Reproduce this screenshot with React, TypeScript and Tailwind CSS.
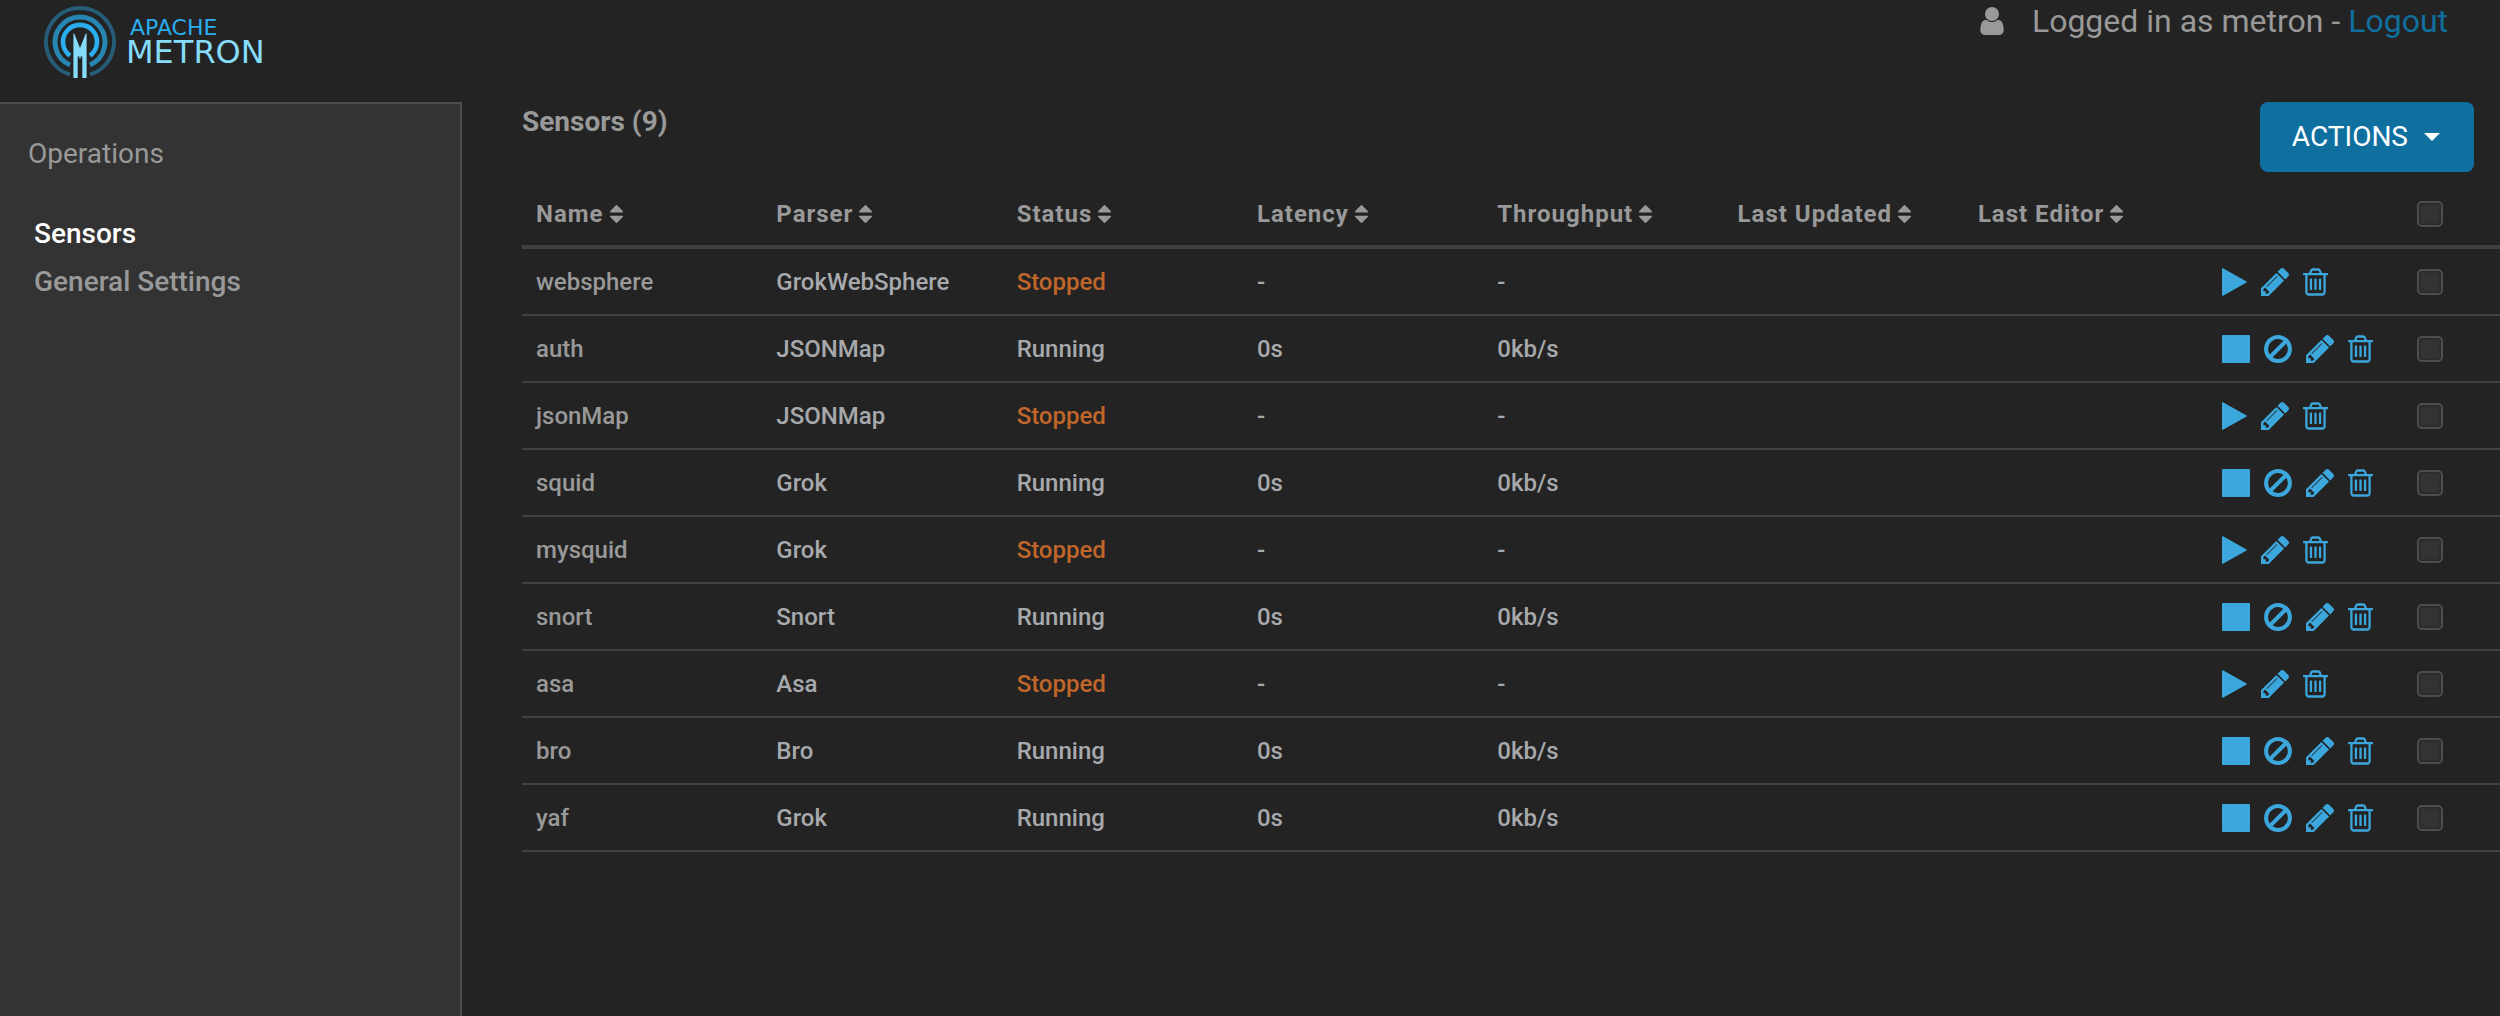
import type { ReactNode } from "react";

type Status = "Running" | "Stopped";

interface Sensor {
  name: string;
  parser: string;
  status: Status;
}

const sensors: Sensor[] = [
  { name: "websphere", parser: "GrokWebSphere", status: "Stopped" },
  { name: "auth", parser: "JSONMap", status: "Running" },
  { name: "jsonMap", parser: "JSONMap", status: "Stopped" },
  { name: "squid", parser: "Grok", status: "Running" },
  { name: "mysquid", parser: "Grok", status: "Stopped" },
  { name: "snort", parser: "Snort", status: "Running" },
  { name: "asa", parser: "Asa", status: "Stopped" },
  { name: "bro", parser: "Bro", status: "Running" },
  { name: "yaf", parser: "Grok", status: "Running" },
];

const columns = [
  "Name",
  "Parser",
  "Status",
  "Latency",
  "Throughput",
  "Last Updated",
  "Last Editor",
];

function UserIcon() {
  return (
    <svg viewBox="256 128 1280 1536" className="h-7 w-6 fill-current" aria-hidden="true">
      <path d="M1536 1399q0 109-62.5 187t-150.5 78h-854q-88 0-150.5-78t-62.5-187q0-85 8.5-160.5t31.5-152 58.5-131 94-89 134.5-34.5q131 128 313 128t313-128q76 0 134.5 34.5t94 89 58.5 131 31.5 152 8.5 160.5zm-256-887q0 159-112.5 271.5t-271.5 112.5-271.5-112.5-112.5-271.5 112.5-271.5 271.5-112.5 271.5 112.5 112.5 271.5z" />
    </svg>
  );
}

function PlayIcon() {
  return (
    <svg viewBox="192 128 1408 1536" className="h-7 w-[25px] fill-current" aria-hidden="true">
      <path d="M1576 927l-1328 738q-23 13-39.5 3t-16.5-36v-1472q0-26 16.5-36t39.5 3l1328 738q23 13 23 31t-23 31z" />
    </svg>
  );
}

function StopIcon() {
  return (
    <svg viewBox="128 128 1536 1536" className="size-7 fill-current" aria-hidden="true">
      <path d="M1664 192v1408q0 26-19 45t-45 19h-1408q-26 0-45-19t-19-45v-1408q0-26 19-45t45-19h1408q26 0 45 19t19 45z" />
    </svg>
  );
}

function BanIcon() {
  return (
    <svg viewBox="128 122 1536 1542" className="size-7 fill-current" aria-hidden="true">
      <path d="M1440 893q0-161-87-295l-754 753q137 89 297 89 111 0 211.5-43.5t173.5-116.5 116-174.5 43-212.5zm-999 299l755-754q-135-91-300-91-148 0-273 73t-198 199-73 274q0 162 89 299zm1223-299q0 157-61 300t-163.5 246-245 164-298.5 61-298.5-61-245-164-163.5-246-61-300 61-299.5 163.5-245.5 245-164 298.5-61 298.5 61 245 164 163.5 245.5 61 299.5z" />
    </svg>
  );
}

function PencilIcon() {
  return (
    <svg viewBox="128 149 1515 1515" className="size-7 fill-current" aria-hidden="true">
      <path d="M491 1536l91-91-235-235-91 91v107h128v128h107zm523-928q0-22-22-22-10 0-17 7l-542 542q-7 7-7 17 0 22 22 22 10 0 17-7l542-542q7-7 7-17zm-54-192l416 416-832 832h-416v-416zm683 96q0 53-37 90l-166 166-416-416 166-165q36-38 90-38 53 0 91 38l235 234q37 39 37 91z" />
    </svg>
  );
}

function TrashIcon() {
  return (
    <svg viewBox="192 128 1408 1536" className="h-7 w-[25px] fill-current" aria-hidden="true">
      <path d="M704 736v576q0 14-9 23t-23 9h-64q-14 0-23-9t-9-23v-576q0-14 9-23t23-9h64q14 0 23 9t9 23zm256 0v576q0 14-9 23t-23 9h-64q-14 0-23-9t-9-23v-576q0-14 9-23t23-9h64q14 0 23 9t9 23zm256 0v576q0 14-9 23t-23 9h-64q-14 0-23-9t-9-23v-576q0-14 9-23t23-9h64q14 0 23 9t9 23zm128 724v-948h-896v948q0 22 7 40.5t14.5 27 10.5 8.5h832q3 0 10.5-8.5t14.5-27 7-40.5zm-672-1076h448l-48-117q-7-9-17-11h-317q-10 2-17 11zm928 32v64q0 14-9 23t-23 9h-96v948q0 83-47 143.5t-113 60.5h-832q-66 0-113-58.5t-47-141.5v-952h-96q-14 0-23-9t-9-23v-64q0-14 9-23t23-9h309l70-167q15-37 54-63t79-26h320q40 0 79 26t54 63l70 167h309q14 0 23 9t9 23z" />
    </svg>
  );
}

function SortIcon() {
  return (
    <svg viewBox="384 192 1024 1408" className="h-[18px] w-[13px] fill-current" aria-hidden="true">
      <path d="M1408 1088q0 26-19 45l-448 448q-19 19-45 19t-45-19l-448-448q-19-19-19-45t19-45 45-19h896q26 0 45 19t19 45zm0-384q0 26-19 45t-45 19h-896q-26 0-45-19t-19-45 19-45l448-448q19-19 45-19t45 19l448 448q19 19 19 45z" />
    </svg>
  );
}

function Logo() {
  return (
    <a href="#home" aria-label="Apache Metron" className="flex items-start gap-2.5">
      <svg viewBox="0 0 72 72" className="size-[72px] overflow-visible" fill="none" aria-hidden="true">
        <path d="M26 68.5A34 34 0 1 1 46 68.5" stroke="#255c77" strokeWidth="4" />
        <path d="M26 59A25 25 0 1 1 46 59" stroke="#2785b1" strokeWidth="5" />
        <path d="M26 49.6A17 17 0 1 1 46 49.6" stroke="#2aaef0" strokeWidth="4.6" />
        <path
          d="M29.4 27.5L30.2 27.5L36 42L41.8 27.5L42.6 27.5V72H38.3V51.5L37.2 49.5L36 53.5L34.8 49.5L33.7 51.5V72H29.4Z"
          fill="#85dcfb"
        />
      </svg>
      <span className="flex flex-col pt-3 font-['DejaVu_Sans',sans-serif]">
        <span className="pl-1 text-[22px] leading-5 text-[#2aaeef]">APACHE</span>
        <span className="text-[32px] leading-7 text-[#85dcfb]">METRON</span>
      </span>
    </a>
  );
}

function IconButton({ label, children }: { label: string; children: ReactNode }) {
  return (
    <button type="button" aria-label={label} className="block cursor-pointer">
      {children}
    </button>
  );
}

function Tick({ label }: { label: string }) {
  return (
    <input
      type="checkbox"
      aria-label={label}
      className="block size-[26px] appearance-none rounded-[5px] border-2 border-[#4d4d4d] bg-[#333] shadow-[inset_0_0_2px_1px_#262626] checked:bg-[#3ca7dc]"
    />
  );
}

function SensorRow({ sensor }: { sensor: Sensor }) {
  const running = sensor.status === "Running";
  return (
    <tr className="h-[67px] [&>td]:border-b-2 [&>td]:border-[#404040] [&>td]:px-3.5">
      <td className="text-[#999]">{sensor.name}</td>
      <td>{sensor.parser}</td>
      <td className={running ? "" : "text-[#c0662a]"}>{sensor.status}</td>
      <td>{running ? "0s" : "-"}</td>
      <td>{running ? "0kb/s" : "-"}</td>
      <td />
      <td />
      <td>
        <div className="flex items-center gap-3.5 pl-1 text-[#3ca7dc]">
          {running ? (
            <>
              <IconButton label={`Stop ${sensor.name}`}>
                <StopIcon />
              </IconButton>
              <IconButton label={`Disable ${sensor.name}`}>
                <BanIcon />
              </IconButton>
            </>
          ) : (
            <IconButton label={`Start ${sensor.name}`}>
              <PlayIcon />
            </IconButton>
          )}
          <IconButton label={`Edit ${sensor.name}`}>
            <PencilIcon />
          </IconButton>
          <IconButton label={`Delete ${sensor.name}`}>
            <TrashIcon />
          </IconButton>
        </div>
      </td>
      <td>
        <Tick label={`Select ${sensor.name}`} />
      </td>
    </tr>
  );
}

export default function App() {
  return (
    <div className="flex min-h-screen flex-col bg-[#232323] font-['Roboto',sans-serif] text-[#999]">
      <header className="flex h-[102px] items-start justify-between pr-[52px] pl-11">
        <div className="pt-1.5">
          <Logo />
        </div>
        <div className="flex items-center text-[32px] leading-[42px]">
          <UserIcon />
          <p className="ml-7">
            Logged in as metron -{" "}
            <a href="#logout" className="text-[#0f6f9f]">
              Logout
            </a>
          </p>
        </div>
      </header>

      <div className="flex flex-1">
        <aside className="w-[462px] shrink-0 border-t-2 border-r-2 border-[#4d4d4d] bg-[#333] pt-[30px] pl-7 text-[28px]">
          <h2 className="leading-10">Operations</h2>
          <nav className="mt-9 flex flex-col pl-1.5 leading-[48px] font-medium">
            <a href="#sensors" aria-current="page" className="text-white">
              Sensors
            </a>
            <a href="#settings">General Settings</a>
          </nav>
        </aside>

        <main className="flex-1 pl-[60px]">
          <div className="flex items-start justify-between pr-[26px] text-[28px]">
            <h1 className="leading-10 font-bold">Sensors (9)</h1>
            <button
              type="button"
              className="flex h-[70px] items-center gap-4 rounded-lg bg-[#0f6f9f] pr-[34px] pl-8 text-white"
            >
              ACTIONS
              <svg viewBox="0 0 16 8" className="h-2 w-4 fill-current" aria-hidden="true">
                <path d="M0 0H16L8 8Z" />
              </svg>
            </button>
          </div>

          <table className="mt-[9px] w-full table-fixed border-separate border-spacing-0 text-left text-2xl font-medium text-[#a7a9ac]">
            <colgroup>
              {columns.map((column) => (
                <col key={column} className="w-[12.15%]" />
              ))}
              <col />
              <col className="w-[97px]" />
            </colgroup>
            <thead>
              <tr className="h-[68px] text-[#999] [&>th]:border-b-4 [&>th]:border-[#404040] [&>th]:px-3.5 [&>th]:pt-0.5">
                {columns.map((column) => (
                  <th key={column} className="font-bold">
                    <button type="button" className="flex items-center gap-1.5 tracking-[1px]">
                      {column}
                      <SortIcon />
                    </button>
                  </th>
                ))}
                <th />
                <th>
                  <Tick label="Select all sensors" />
                </th>
              </tr>
            </thead>
            <tbody>
              {sensors.map((sensor) => (
                <SensorRow key={sensor.name} sensor={sensor} />
              ))}
            </tbody>
          </table>
        </main>
      </div>
    </div>
  );
}
